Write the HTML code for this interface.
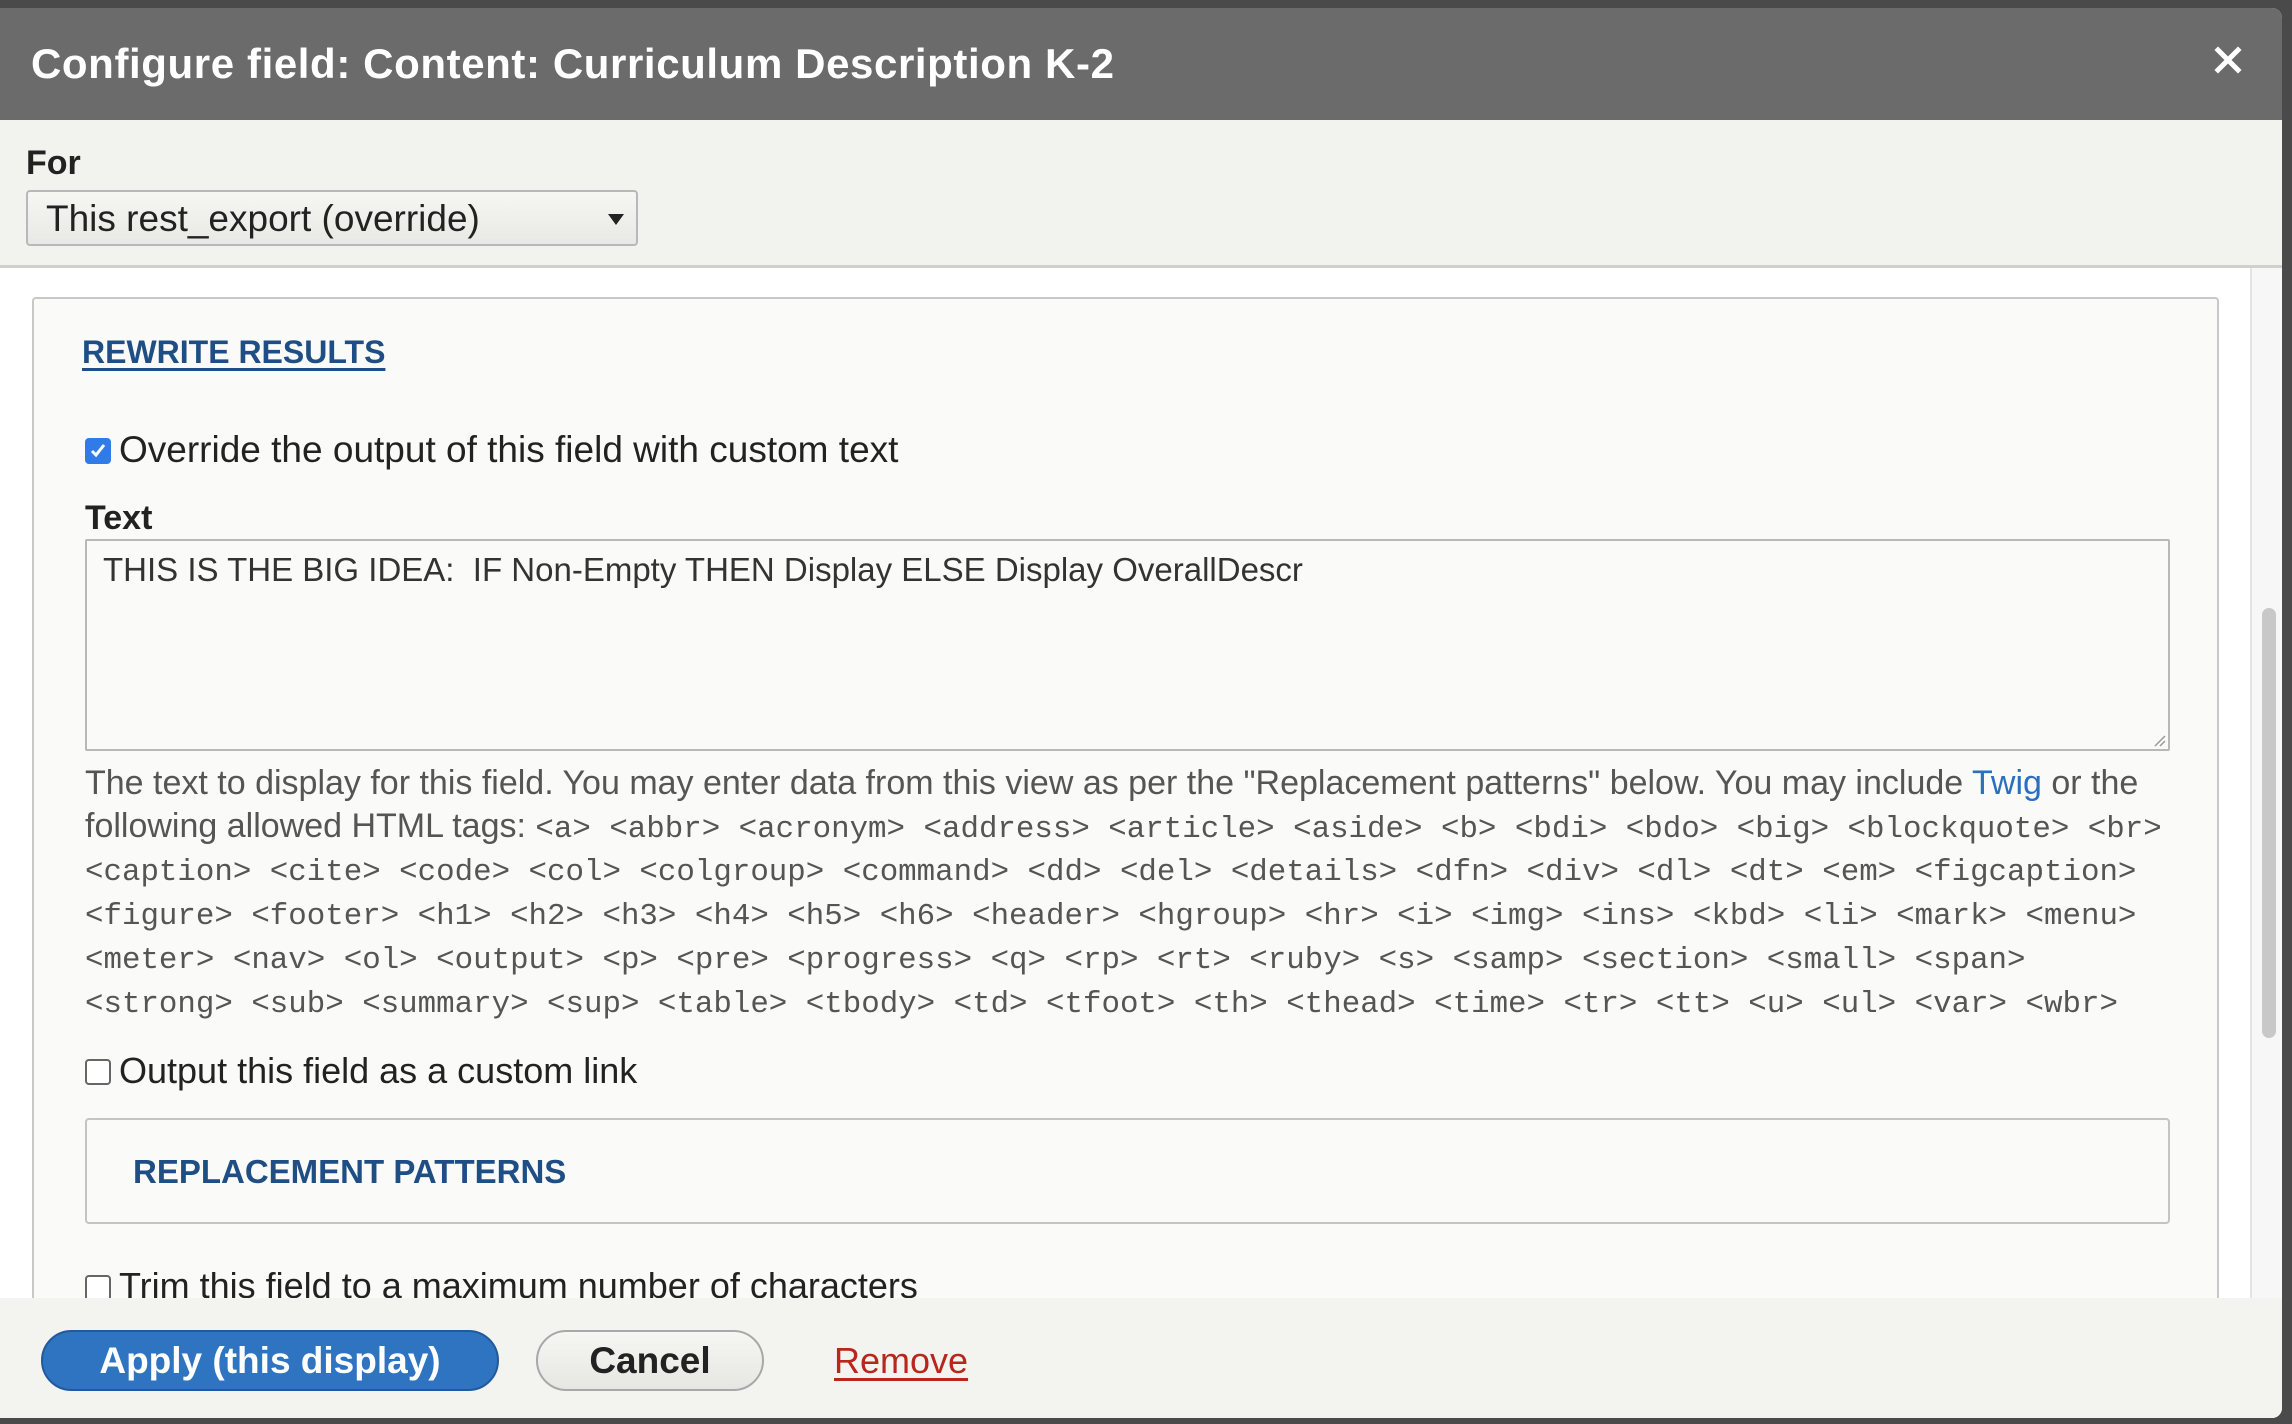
<!DOCTYPE html>
<html><head><meta charset="utf-8">
<style>
html,body{margin:0;padding:0;}
body{width:2292px;height:1424px;background:#4a4a4a;position:relative;overflow:hidden;font-family:"Liberation Sans","DejaVu Sans",sans-serif;color:#222;}
.dlg{position:absolute;left:0;top:8px;width:2282px;height:1410px;background:#fafaf8;border-radius:0 10px 10px 0;overflow:hidden;}
.title{position:absolute;left:0;top:0;width:100%;height:112px;background:#6b6b6b;}
.title h1{position:absolute;left:31px;top:32px;margin:0;font-size:42px;font-weight:bold;color:#fff;white-space:nowrap;letter-spacing:0.6px;}
.close{position:absolute;left:2214px;top:38px;width:28px;height:28px;}
.top{position:absolute;left:0;top:112px;width:100%;height:145px;background:#f2f2ee;border-bottom:3px solid #d0d0cc;}
.lbl{position:absolute;font-weight:bold;font-size:34px;white-space:nowrap;}
.sel{position:absolute;left:26px;top:70px;width:612px;height:56px;border:2px solid #b8b8b8;border-radius:4px;background:linear-gradient(#f6f6f3,#e8e8e4);box-sizing:border-box;}
.sel span{position:absolute;left:18px;top:6px;font-size:37px;color:#222;white-space:nowrap;}
.sel i{position:absolute;right:12px;top:22px;width:0;height:0;border-left:8px solid transparent;border-right:8px solid transparent;border-top:11px solid #222;}
.body{position:absolute;left:0;top:260px;width:2250px;height:1030px;background:#fff;}
.fs{position:absolute;left:32px;top:29px;width:2187px;height:1100px;background:#fafaf8;border:2px solid #c8c8c8;border-radius:4px;box-sizing:border-box;}
.t{position:absolute;white-space:nowrap;font-size:36px;color:#222;}
.cb{position:absolute;width:26px;height:26px;border:2px solid #666;border-radius:4px;box-sizing:border-box;background:#fff;}
.cb.on{background:#2f7be8;border-color:#2f7be8;}
.ta{position:absolute;left:51px;top:240px;width:2085px;height:212px;border:2px solid #b8b8b8;background:#fafaf8;box-sizing:border-box;border-radius:2px;}
.desc{position:absolute;left:51px;font-size:34px;color:#555;white-space:nowrap;}
.mono{font-family:"Liberation Mono","DejaVu Sans Mono",monospace;font-size:30.8px;color:#555;}
.rp{position:absolute;left:51px;top:819px;width:2085px;height:106px;border:2px solid #c4c4c4;border-radius:4px;box-sizing:border-box;background:#fafaf8;}
.scroll{position:absolute;left:2250px;top:260px;width:32px;height:1040px;background:#f7f7f7;border-left:2px solid #e4e4e4;box-sizing:border-box;}
.thumb{position:absolute;left:10px;top:340px;width:14px;height:430px;background:#c8c8c8;border-radius:7px;}
.foot{position:absolute;left:0;top:1290px;width:100%;height:120px;background:#f3f3ef;}
.btn{position:absolute;top:32px;height:61px;border-radius:31px;box-sizing:border-box;font-size:37px;font-weight:bold;text-align:center;line-height:57px;white-space:nowrap;}
</style></head><body>
<div class="dlg">
  <div class="title">
    <h1>Configure field: Content: Curriculum Description K-2</h1>
    <svg class="close" viewBox="0 0 28 28"><path d="M4 4L24 24M24 4L4 24" stroke="#fff" stroke-width="5" stroke-linecap="square"/></svg>
  </div>
  <div class="top">
    <div class="lbl" style="left:26px;top:24px;">For</div>
    <div class="sel"><span>This rest_export (override)</span><i></i></div>
  </div>
  <div class="body">
    <div class="fs">
      <div class="t" style="left:48px;top:35px;font-weight:bold;color:#1e4e84;text-decoration:underline;text-decoration-thickness:3px;text-underline-offset:5px;font-size:32px;">REWRITE RESULTS</div>
      <div class="cb on" style="left:51px;top:139px;"><svg width="22" height="22" viewBox="0 0 22 22" style="position:absolute;left:0;top:0"><path d="M5 11L9 15L17 5" stroke="#fff" stroke-width="3" fill="none"/></svg></div>
      <div class="t" style="left:85px;top:130px;font-size:37px;">Override the output of this field with custom text</div>
      <div class="t" style="left:51px;top:200px;font-weight:bold;font-size:34px;">Text</div>
      <div class="ta"><div class="t" style="left:16px;top:10px;font-size:33px;color:#333;">THIS IS THE BIG IDEA:&nbsp; IF Non-Empty THEN Display ELSE Display OverallDescr</div>
        <svg style="position:absolute;right:2px;bottom:2px" width="14" height="14"><path d="M13 3L3 13M13 8L8 13" stroke="#999" stroke-width="1.5"/></svg></div>
      <div class="desc" style="top:465px;">The text to display for this field. You may enter data from this view as per the "Replacement patterns" below. You may include <span style="color:#2a6fc0">Twig</span> or the</div>
      <div class="desc" style="top:508px;">following allowed HTML tags: <span class="mono">&lt;a&gt; &lt;abbr&gt; &lt;acronym&gt; &lt;address&gt; &lt;article&gt; &lt;aside&gt; &lt;b&gt; &lt;bdi&gt; &lt;bdo&gt; &lt;big&gt; &lt;blockquote&gt; &lt;br&gt;</span></div>
      <div class="desc mono" style="top:556px;">&lt;caption&gt; &lt;cite&gt; &lt;code&gt; &lt;col&gt; &lt;colgroup&gt; &lt;command&gt; &lt;dd&gt; &lt;del&gt; &lt;details&gt; &lt;dfn&gt; &lt;div&gt; &lt;dl&gt; &lt;dt&gt; &lt;em&gt; &lt;figcaption&gt;</div>
      <div class="desc mono" style="top:600px;">&lt;figure&gt; &lt;footer&gt; &lt;h1&gt; &lt;h2&gt; &lt;h3&gt; &lt;h4&gt; &lt;h5&gt; &lt;h6&gt; &lt;header&gt; &lt;hgroup&gt; &lt;hr&gt; &lt;i&gt; &lt;img&gt; &lt;ins&gt; &lt;kbd&gt; &lt;li&gt; &lt;mark&gt; &lt;menu&gt;</div>
      <div class="desc mono" style="top:644px;">&lt;meter&gt; &lt;nav&gt; &lt;ol&gt; &lt;output&gt; &lt;p&gt; &lt;pre&gt; &lt;progress&gt; &lt;q&gt; &lt;rp&gt; &lt;rt&gt; &lt;ruby&gt; &lt;s&gt; &lt;samp&gt; &lt;section&gt; &lt;small&gt; &lt;span&gt;</div>
      <div class="desc mono" style="top:688px;">&lt;strong&gt; &lt;sub&gt; &lt;summary&gt; &lt;sup&gt; &lt;table&gt; &lt;tbody&gt; &lt;td&gt; &lt;tfoot&gt; &lt;th&gt; &lt;thead&gt; &lt;time&gt; &lt;tr&gt; &lt;tt&gt; &lt;u&gt; &lt;ul&gt; &lt;var&gt; &lt;wbr&gt;</div>
      <div class="cb" style="left:51px;top:760px;"></div>
      <div class="t" style="left:85px;top:751px;">Output this field as a custom link</div>
      <div class="rp"><div class="t" style="left:46px;top:33px;font-weight:bold;color:#1e4e84;font-size:33px;">REPLACEMENT PATTERNS</div></div>
      <div class="cb" style="left:51px;top:976px;"></div>
      <div class="t" style="left:85px;top:966px;">Trim this field to a maximum number of characters</div>
    </div>
  </div>
  <div class="scroll"><div class="thumb"></div></div>
  <div class="foot">
    <div class="btn" style="left:41px;width:458px;background:#2f74c0;border:2px solid #215a9c;color:#fff;">Apply (this display)</div>
    <div class="btn" style="left:536px;width:228px;background:linear-gradient(#f6f6f3,#e6e6e2);border:2px solid #a8a8a8;color:#222;">Cancel</div>
    <div class="t" style="left:834px;top:42px;font-size:36px;color:#b8261c;text-decoration:underline;text-underline-offset:5px;">Remove</div>
  </div>
</div>
</body></html>
